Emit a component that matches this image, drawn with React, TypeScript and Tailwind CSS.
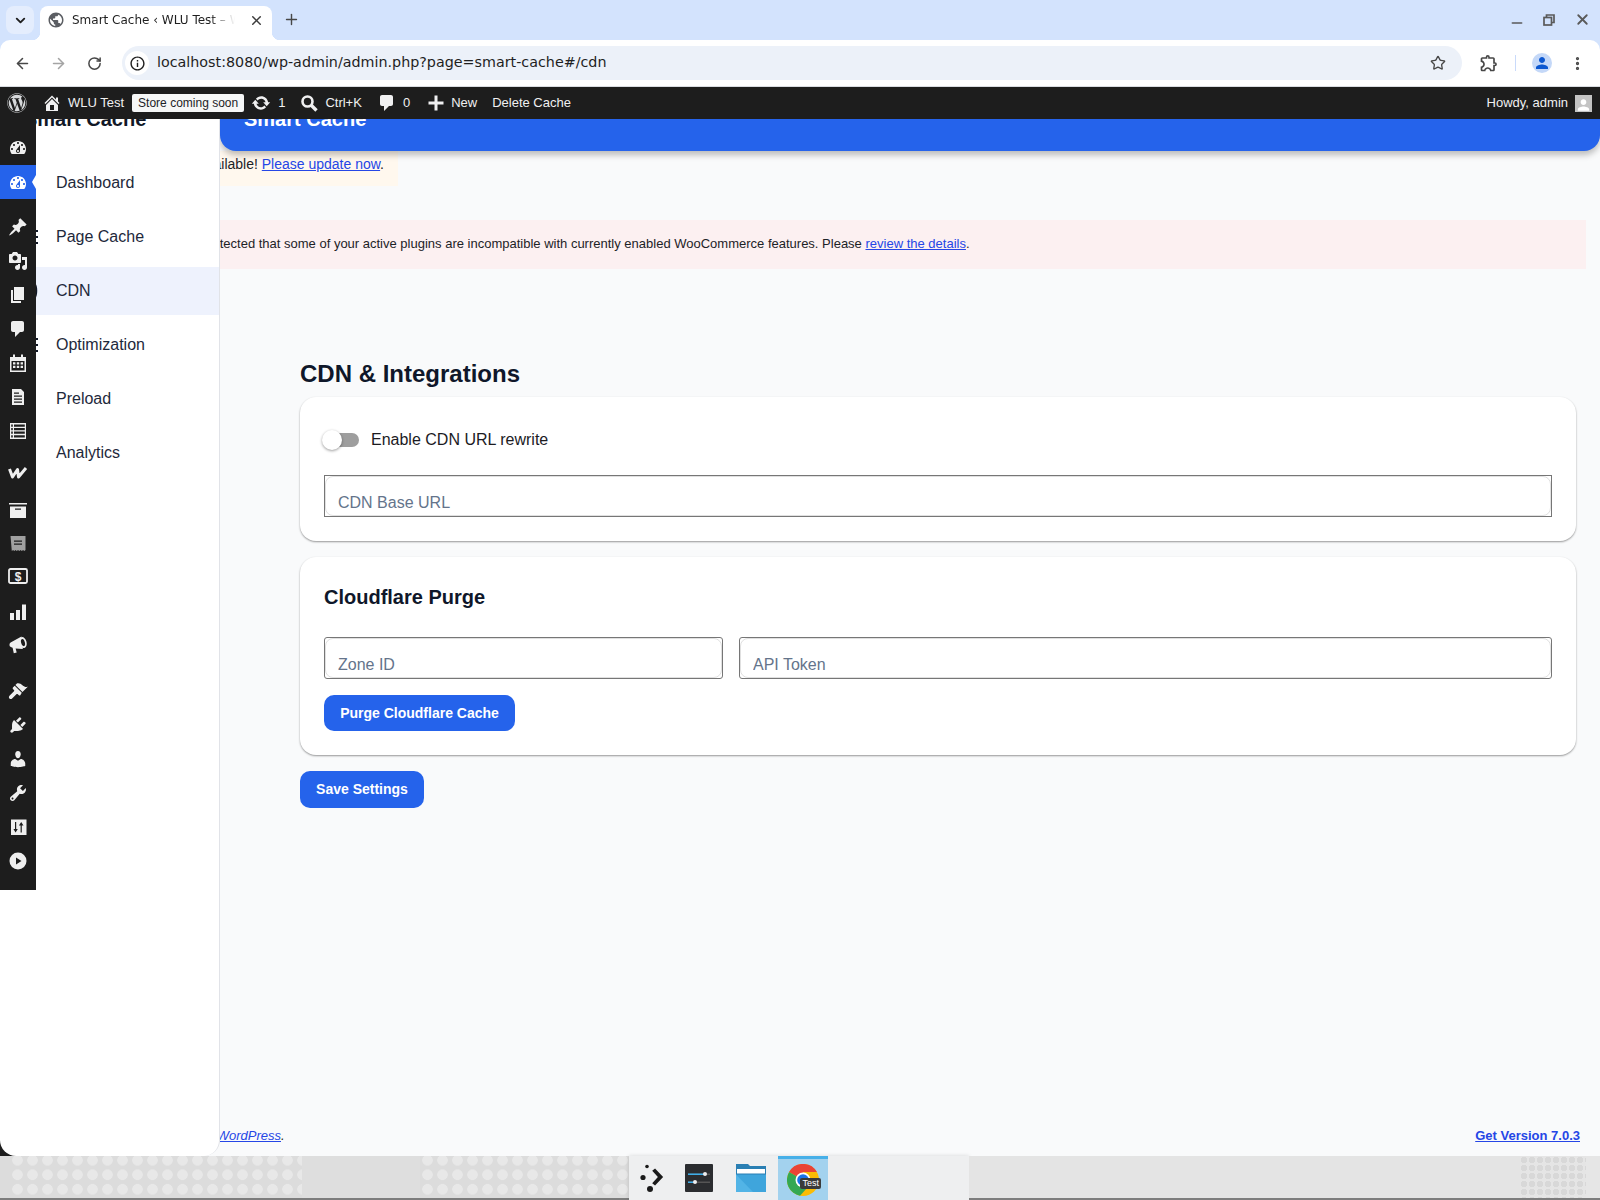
import { ArrowLeft, ArrowRight, ChevronDown, Minus, MoreVertical, Plus, RotateCw, Star, X } from "lucide-react";
import { FaWordpress } from "react-icons/fa";
import { MdInfoOutline, MdOutlineExtension, MdPerson, MdPublic } from "react-icons/md";
import type { ReactNode } from "react";

// Dashicons-style paths for the wp-admin menu, all on a 20x20 box.
const ICONS: Record<string, string> = {
  dashboard:
    "M3.76 16h12.48c1.1-1.37 1.76-3.11 1.76-5 0-4.42-3.58-8-8-8s-8 3.58-8 8c0 1.89.66 3.63 1.76 5zM10 4c.55 0 1 .45 1 1s-.45 1-1 1-1-.45-1-1 .45-1 1-1zM6 6c.55 0 1 .45 1 1s-.45 1-1 1-1-.45-1-1 .45-1 1-1zm8 0c.55 0 1 .45 1 1s-.45 1-1 1-1-.45-1-1 .45-1 1-1zm-5.37 5.55L12 7v6c0 1.1-.9 2-2 2s-2-.9-2-2c0-.57.24-1.08.63-1.45zM4 10c.55 0 1 .45 1 1s-.45 1-1 1-1-.45-1-1 .45-1 1-1zm12 0c.55 0 1 .45 1 1s-.45 1-1 1-1-.45-1-1 .45-1 1-1zm-5 3c0-.55-.45-1-1-1s-1 .45-1 1 .45 1 1 1 1-.45 1-1z",
  pin: "M10.44 3.02l1.82-1.82 6.36 6.35-1.83 1.82c-1.05-.68-2.48-.57-3.41.36l-.75.75c-.92.93-1.04 2.35-.35 3.41l-1.83 1.82-2.41-2.41-2.8 2.79c-.42.42-3.38 2.71-3.8 2.29s1.86-3.39 2.28-3.81l2.79-2.79L4.1 9.36l1.83-1.82c1.05.69 2.48.57 3.4-.36l.75-.75c.93-.92 1.05-2.35.36-3.41z",
  media:
    "M13 11V4c0-.55-.45-1-1-1h-1.67L9 1H5L3.67 3H2c-.55 0-1 .45-1 1v7c0 .55.45 1 1 1h10c.55 0 1-.45 1-1zM7 4.5c1.38 0 2.5 1.12 2.5 2.5S8.38 9.5 7 9.5 4.5 8.38 4.5 7 5.62 4.5 7 4.5zM14 6h5v10.5c0 1.38-1.12 2.5-2.5 2.5S14 17.88 14 16.5s1.12-2.5 2.5-2.5c.17 0 .34.02.5.05V9h-3V6zm-4 8.05V13h2v3.5c0 1.38-1.12 2.5-2.5 2.5S7 17.88 7 16.5 8.12 14 9.5 14c.17 0 .34.02.5.05z",
  pages: "M6 15V2h10v13H6zm-1 1h8v2H3V5h2v11z",
  comment: "M5 2h9c1.1 0 2 .9 2 2v7c0 1.1-.9 2-2 2h-2l-5 5v-5H5c-1.1 0-2-.9-2-2V4c0-1.1.9-2 2-2z",
  calendar:
    "M5 1.5h2V4h6V1.5h2V4h3v15H2V4h3zM3.5 8v9.5h13V8zM5 9.2h2.4v2.2H5zM8.8 9.2h2.4v2.2H8.8zM12.6 9.2H15v2.2h-2.4zM5 12.8h2.4V15H5zM8.8 12.8h2.4V15H8.8zM12.6 12.8H15V15h-2.4z",
  file: "M4 2h9l3 3v13H4zM6 5.5h5v1.2H6zM6 8.5h8v1.2H6zM6 11.5h8v1.2H6zM6 14.5h8v1.2H6z",
  table:
    "M2 2h16v16H2zM3.2 3.5v2.2h1.6V3.5zM6 3.5v2.2h10.8V3.5zM3.2 7v2.2h1.6V7zM6 7v2.2h10.8V7zM3.2 10.6v2.2h1.6v-2.2zM6 10.6v2.2h10.8v-2.2zM3.2 14.2v2.2h1.6v-2.2zM6 14.2v2.2h10.8v-2.2z",
  archive: "M1 3h18v1.5H1zM2 6.5h16V18H2zM7 8.5v1.2h6V8.5z",
  receipt: "M2.5 2h15v14l-1.2 1-1.2-1-1.3 1-1.2-1-1.3 1-1.3-1-1.2 1-1.3-1-1.2 1-1.2-1-1.3 1zM6 6.5v1.3h8V6.5zM6 9.5v1.3h8V9.5z",
  bars: "M2 11h4v7H2zM8 8h4v10H8zM14 2.5h4V18h-4z",
  brush:
    "M14.48 11.06L7.41 3.99l1.5-1.5c.5-.56 2.3-.47 3.51.32 1.21.8 1.43 1.28 2.91 2.1 1.18.64 2.45 1.26 4.45.85zM13.77 11.77L6.7 4.7 4.93 6.47c-.39.39-.39 1.02 0 1.41l1.06 1.06c.39.39.39 1.03 0 1.42L1.5 14.7c-.8.8-.8 1.9-.1 2.7s1.9.9 2.7.1l4.3-4.3c.39-.39 1.03-.39 1.42 0l1.06 1.06c.39.39 1.02.39 1.41 0z",
  plug: "M13.11 4.36L9.87 7.6 8 5.73l3.24-3.24c.35-.34 1.05-.2 1.56.32.52.51.66 1.21.31 1.55zm-8 1.77l.91-1.12 9.01 9.01-1.19.84c-.71.71-2.63 1.16-3.82 1.16H6.14L4.9 17.26c-.59.59-1.54.59-2.12 0-.59-.58-.59-1.53 0-2.12l1.24-1.24v-3.88c0-1.13.4-3.19 1.09-3.89zm7.26 3.97l3.24-3.24c.34-.35 1.04-.21 1.55.31.52.51.66 1.21.31 1.55l-3.24 3.25z",
  user: "M10 9.25c-2.27 0-2.73-3.44-2.73-3.44C7 4.02 7.82 2 9.97 2c2.16 0 2.98 2.02 2.71 3.81 0 0-.41 3.44-2.68 3.44zm0 2.57L12.72 10c2.39 0 4.52 2.33 4.52 4.53v2.49s-3.65 1.13-7.24 1.13c-3.65 0-7.24-1.13-7.24-1.13v-2.49c0-2.25 1.94-4.48 4.47-4.48z",
  wrench:
    "M16.68 9.77c-1.34 1.34-3.3 1.67-4.95.99l-5.41 6.52c-.99.99-2.59.99-3.58 0s-.99-2.59 0-3.57l6.52-5.42c-.68-1.65-.35-3.61.99-4.95 1.28-1.28 3.12-1.62 4.72-1.06l-2.89 2.89 2.82 2.82 2.86-2.87c.53 1.58.18 3.39-1.08 4.65zM3.81 16.21c.4.39 1.04.39 1.43 0 .4-.4.4-1.04 0-1.43-.39-.4-1.03-.4-1.43 0-.39.39-.39 1.03 0 1.43z",
  sliders: "M3 2.5h15.5V18H3zM7 5v7H5.4L7.6 15.5 9.8 12H8.2V5zM12.6 15.5h1.2V8.5h1.7l-2.3-3.5-2.3 3.5h1.7z",
  play: "M10 1.5a8.5 8.5 0 1 0 0 17a8.5 8.5 0 1 0 0-17zM8 6.5l5.5 3.5L8 13.5z",
  update:
    "M10.2 3.28c3.53 0 6.43 2.61 6.92 6h2.08l-3.5 4-3.5-4h2.32c-.45-1.97-2.21-3.45-4.32-3.45-1.45 0-2.73.71-3.54 1.78L4.95 5.66C6.23 4.2 8.11 3.28 10.2 3.28zm-.4 13.44c-3.52 0-6.43-2.61-6.92-6H.8l3.5-4c1.17 1.33 2.33 2.67 3.5 4H5.48c.45 1.97 2.21 3.45 4.32 3.45 1.45 0 2.73-.71 3.54-1.78l1.71 1.95c-1.28 1.46-3.15 2.38-5.25 2.38z",
  home: "M16 8.5l1.53 1.53-1.06 1.06L10 4.62l-6.47 6.47-1.06-1.06L10 2.5l4 4v-2h2v4zm-6-2.46l6 5.99V18H4v-5.97zM12 17v-5H8v5h4z",
  plus: "M17.5 8.5v3h-6v6h-3v-6h-6v-3h6v-6h3v6z",
};

function Dash({ name, className = "w-5 h-5" }: { name: string; className?: string }) {
  return (
    <svg viewBox="0 0 20 20" className={className} fill="currentColor" fillRule="evenodd" aria-hidden>
      <path d={ICONS[name]} />
    </svg>
  );
}

// --- browser chrome ---

function TabStrip() {
  return (
    <div className="flex h-[40px] items-end pl-[6px] pr-[8px]">
      <div className="mb-[6px] flex h-[28px] w-[28px] items-center justify-center rounded-lg bg-[#e4edfd] text-[#1f1f1f]">
        <ChevronDown size={15} strokeWidth={3} />
      </div>
      <span className="relative z-10 -ml-[2px] h-2 w-2 bg-[radial-gradient(circle_at_0_0,transparent_8px,white_8.5px)]" />
      <div className="flex h-[34px] w-[232px] items-center rounded-t-lg bg-white pb-[6px] pl-[7px]">
        <MdPublic size={18} className="shrink-0 text-[#5b5e63]" />
        <span className="ml-[7px] w-[168px] overflow-hidden whitespace-nowrap font-['DejaVu_Sans',sans-serif] text-[12px] text-[#1f1f1f] [mask-image:linear-gradient(to_right,black_82%,transparent_97%)]">
          Smart Cache ‹ WLU Test – WordPress
        </span>
        <X size={15} strokeWidth={2.4} className="ml-[9px] text-[#3c3c3c]" />
      </div>
      <span className="h-2 w-2 bg-[radial-gradient(circle_at_100%_0,transparent_8px,white_8.5px)]" />
      <Plus size={17} className="mb-[12px] ml-[3px] text-[#474747]" />
      <div className="ml-auto mb-[9px] flex items-center text-[#5a5a5a]">
        <Minus size={16} strokeWidth={2.4} className="mt-[7px] translate-x-[1px]" />
        <svg viewBox="0 0 12 12" className="ml-[18px] h-[12px] w-[12px] translate-x-[1px]" fill="none" stroke="currentColor" strokeWidth="1.7">
          <path d="M3.5 3V1h7.5v7.5H9" />
          <rect x="1" y="3.5" width="7.5" height="7.5" />
        </svg>
        <X size={17} strokeWidth={2.6} className="ml-[21px] -translate-x-[1px]" />
      </div>
    </div>
  );
}

function Toolbar() {
  return (
    <div className="flex h-[47px] items-center rounded-t-[10px] border-b border-[#d9dce1] bg-white pl-[4px]">
      <div className="flex h-9 w-9 items-center justify-center text-[#474747]">
        <ArrowLeft size={17} strokeWidth={2.2} />
      </div>
      <div className="flex h-9 w-9 items-center justify-center text-[#a4a4a4]">
        <ArrowRight size={17} strokeWidth={2.2} />
      </div>
      <div className="flex h-9 w-9 items-center justify-center text-[#474747]">
        <RotateCw size={15} strokeWidth={2.4} />
      </div>
      <div className="ml-[10px] flex h-[34px] w-[1340px] items-center rounded-full bg-[#ecf1f9] pl-[3px] pr-[16px]">
        <div className="flex h-[24px] w-[24px] items-center justify-center rounded-full bg-white text-[#1f1f1f]">
          <MdInfoOutline size={17} />
        </div>
        <span className="ml-[8px] font-['DejaVu_Sans',sans-serif] text-[14.3px] text-[#1f1f1f]">
          localhost:8080/wp-admin/admin.php?page=smart-cache#/cdn
        </span>
        <Star size={16} strokeWidth={2} className="ml-auto text-[#474747]" />
      </div>
      <MdOutlineExtension size={20} className="ml-[17px] text-[#474747]" />
      <div className="ml-[16px] h-[16px] w-[1px] bg-[#c9dafa]" />
      <div className="ml-[16px] flex h-[20px] w-[20px] items-center justify-center rounded-full bg-[#c4d8f8] text-[#0b57d0]">
        <MdPerson size={18} />
      </div>
      <MoreVertical size={17} strokeWidth={2.6} className="ml-[17px] text-[#474747]" />
    </div>
  );
}

// --- wp admin bar ---

function AdminBar() {
  return (
    <div className="flex h-[32px] items-center bg-[#1d1d1d] pr-[8px] text-[13px] text-[#f0f0f1]">
      <div className="flex w-[33px] justify-center">
        <FaWordpress size={20} className="text-[#d6d8da]" />
      </div>
      <Dash name="home" className="ml-[9px] h-5 w-5" />
      <span className="ml-[6px]">WLU Test</span>
      <span className="ml-[8px] flex h-[18px] items-center rounded-[2px] bg-[#f6f7f7] px-[6px] text-[12px] text-[#1d2327]">
        Store coming soon
      </span>
      <Dash name="update" className="ml-[7px] h-5 w-5" />
      <span className="ml-[7px]">1</span>
      <svg viewBox="0 0 20 20" className="ml-[14px] h-5 w-5" fill="none" stroke="currentColor" aria-hidden>
        <circle cx="8.5" cy="8.5" r="5" strokeWidth="2.6" />
        <path d="M12 12l5.5 5.5" strokeWidth="3.4" />
      </svg>
      <span className="ml-[6px]">Ctrl+K</span>
      <Dash name="comment" className="ml-[15px] h-5 w-5" />
      <span className="ml-[6px]">0</span>
      <Dash name="plus" className="ml-[16px] h-5 w-5" />
      <span className="ml-[5px]">New</span>
      <span className="ml-[15px]">Delete Cache</span>
      <span className="ml-auto">Howdy, admin</span>
      <div className="ml-[7px] flex h-[17px] w-[17px] items-end justify-center overflow-hidden bg-[#c4c4c4] text-white">
        <MdPerson size={20} className="-mb-[3px]" />
      </div>
    </div>
  );
}

// --- wp admin menu, lies over the plugin's own sidebar ---

const MENU: { name: string; cls?: string; wrap?: string }[] = [
  { name: "dashboard" },
  { name: "dashboard", wrap: "active", cls: "translate-y-[1px]" },
  { name: "pin", wrap: "mt-[11px]" },
  { name: "media" },
  { name: "pages" },
  { name: "comment" },
  { name: "calendar" },
  { name: "file" },
  { name: "table" },
  { name: "woo", wrap: "mt-[8px]" },
  { name: "archive", cls: "translate-y-[3px]" },
  { name: "receipt", cls: "translate-y-[3px] text-[#a0a0a0]" },
  { name: "dollar", cls: "translate-y-[1px]" },
  { name: "bars", cls: "translate-y-[3px]" },
  { name: "horn", cls: "translate-y-[2px]" },
  { name: "brush", wrap: "mt-[14px]" },
  { name: "plug" },
  { name: "user" },
  { name: "wrench" },
  { name: "sliders" },
  { name: "play" },
];

function MenuIcon({ name, cls = "" }: { name: string; cls?: string }) {
  if (name === "woo") {
    return (
      <svg viewBox="0 0 20 20" className="h-5 w-5" fill="none" stroke="currentColor" strokeWidth="3" strokeLinejoin="round" aria-hidden>
        <path d="M1.5 6l3 8 5-7.5 1 7.5 7.5-9" />
      </svg>
    );
  }
  if (name === "dollar") {
    return (
      <svg viewBox="0 0 20 20" className={`h-5 w-5 ${cls}`} aria-hidden>
        <rect x="1" y="3" width="18" height="14" rx="1.5" fill="none" stroke="currentColor" strokeWidth="1.8" />
        <text x="10" y="14.5" textAnchor="middle" fontSize="12" fontWeight="700" fontFamily="Liberation Sans" fill="currentColor">
          $
        </text>
      </svg>
    );
  }
  if (name === "horn") {
    return (
      <svg viewBox="0 0 20 20" className={`h-5 w-5 ${cls}`} aria-hidden>
        <path d="M13.5 1.5L2.6 7.4c-1.6.9-1.5 4 .2 4.7l1.8.6 1.2 5.5 2.9-.7-1.1-4.1 7.2 .6z" fill="currentColor" />
        <ellipse cx="15" cy="7.6" rx="3.6" ry="5.6" transform="rotate(-14 15 7.6)" fill="currentColor" />
        <ellipse cx="15" cy="7.6" rx="1.9" ry="3.6" transform="rotate(-14 15 7.6)" fill="#1d1d1d" />
      </svg>
    );
  }
  return <Dash name={name} className={`h-5 w-5 ${cls}`} />;
}

function WpMenu() {
  return (
    <div className="absolute left-0 top-0 z-20 flex h-[771px] w-[36px] flex-col bg-[#1d1d1d] pt-[12px] text-[#efefef]">
      {MENU.map((m, i) => (
        <div
          key={i}
          className={`relative flex h-[34px] shrink-0 items-center justify-center ${m.wrap === "active" ? "bg-[#2563eb] text-white" : m.wrap ?? ""}`}
        >
          <MenuIcon name={m.name} cls={m.cls} />
          {m.wrap === "active" && (
            <span className="absolute right-0 top-[10px] h-0 w-0 border-y-[7px] border-r-[4px] border-y-transparent border-r-white" />
          )}
        </div>
      ))}
    </div>
  );
}

// --- plugin sidebar ---

const NAV: { label: string; active?: boolean; stub: ReactNode }[] = [
  { label: "Dashboard", stub: <path d="M12 0h2v17h-2z" /> },
  { label: "Page Cache", stub: <path d="M11 2h5v2h-5zM11 8h5v2h-5zM11 14h5v2h-5z" /> },
  { label: "CDN", active: true, stub: <path d="M13 1c3 2 3 13 0 16l-1-1c2-3 2-11 0-14z" /> },
  { label: "Optimization", stub: <path d="M11 2h5v2h-5zM11 8h5v2h-5zM11 14h5v2h-5z" /> },
  { label: "Preload", stub: null },
  { label: "Analytics", stub: null },
];

function Sidebar() {
  return (
    <div className="relative w-[220px] shrink-0 bg-[#f9fafb]">
      <div className="absolute bottom-0 left-0 h-4 w-4 bg-[#1d1d1d]" />
      <div className="relative flex h-full flex-col overflow-hidden rounded-b-2xl border-r border-[#e1e3e8] bg-white">
        <div className="-mt-[14px] mb-[26px] pl-6 text-[20px] font-bold leading-[28px] text-[#111827]">Smart Cache</div>
        {NAV.map((n) => (
          <div
            key={n.label}
            className={`mb-[6px] flex h-12 items-center pl-[22px] text-[16px] text-[#1e293b] ${n.active ? "bg-[#eef2fd]" : ""}`}
          >
            <svg viewBox="0 0 16 18" className="mr-[18px] h-[18px] w-4 shrink-0 text-[#111827]" fill="currentColor" aria-hidden>
              {n.stub}
            </svg>
            {n.label}
          </div>
        ))}
      </div>
      <WpMenu />
    </div>
  );
}

// --- main content ---

function TextField({ placeholder, square }: { placeholder: string; square?: boolean }) {
  return (
    <div className={`h-[42px] min-w-0 flex-1 border border-[#767676] bg-white ${square ? "" : "rounded-[3px]"}`}>
      <input
        placeholder={placeholder}
        className="block h-full w-full rounded-[8px] border border-[#e0e0e0] bg-transparent px-[12px] pt-[14px] text-[16px] outline-none placeholder:text-[#64748b]"
      />
    </div>
  );
}

function Main() {
  return (
    <div className="flex min-w-0 flex-1 flex-col overflow-hidden bg-[#f9fafb]">
      <div className="relative z-10 -mt-[24px] h-[56px] shrink-0 rounded-b-2xl bg-[#2563eb] pl-[24px] pt-[10px] text-[20px] font-bold leading-[28px] text-white shadow-[0_4px_6px_rgba(0,0,0,0.25)]">
        Smart Cache
      </div>
      <div className="flex h-[35px] w-[178px] shrink-0 items-center justify-end overflow-hidden whitespace-nowrap bg-[#fff8ee] pb-[9px] pr-[14px] text-[14px] text-[#1d2327]">
        <span>
          WordPress 7.0.3 is available!{" "}
          <a href="#" className="text-[#2546e6] underline">
            Please update now
          </a>
          .
        </span>
      </div>
      <div className="mt-[34px] mr-[14px] flex h-[49px] shrink-0 items-center overflow-hidden whitespace-nowrap bg-[#fcf0f1] pb-[2px] text-[13px] text-[#1d2327]">
        <span className="-ml-[133px]">
          WooCommerce has detected that some of your active plugins are incompatible with currently enabled WooCommerce features. Please{" "}
          <a href="#" className="text-[#2546e6] underline">
            review the details
          </a>
          .
        </span>
      </div>
      <div className="ml-[80px] mr-[24px] flex flex-col">
        <h2 className="mt-[89px] mb-[7px] text-[24px] font-bold leading-[32px] text-[#0f172a]">CDN &amp; Integrations</h2>
        <div className="rounded-2xl bg-white px-6 pb-6 pt-[33px] shadow-[0_1px_2px_rgba(0,0,0,0.4)]">
          <div className="flex h-5 items-center">
            <div className="relative h-[14px] w-[35px] rounded-full bg-[#9e9e9e]">
              <span className="absolute -left-[2px] -top-[3px] h-5 w-5 rounded-full bg-white shadow-[0_1px_3px_rgba(0,0,0,0.4)]" />
            </div>
            <span className="ml-[12px] text-[16px] text-[#1c1b1f]">Enable CDN URL rewrite</span>
          </div>
          <div className="mt-[25px] flex">
            <TextField placeholder="CDN Base URL" square />
          </div>
        </div>
        <div className="mt-4 rounded-2xl bg-white px-6 pb-6 pt-[26px] shadow-[0_1px_2px_rgba(0,0,0,0.4)]">
          <h3 className="text-[20px] font-bold leading-[28px] text-[#0f172a]">Cloudflare Purge</h3>
          <div className="mt-[26px] flex gap-4">
            <div className="flex w-[399px] shrink-0">
              <TextField placeholder="Zone ID" />
            </div>
            <TextField placeholder="API Token" />
          </div>
          <button className="mt-4 flex h-[36px] w-[191px] items-center justify-center rounded-[10px] bg-[#2563eb] text-[14px] font-bold text-white">
            Purge Cloudflare Cache
          </button>
        </div>
        <button className="mt-4 flex h-[37px] w-[124px] items-center justify-center rounded-[10px] bg-[#2563eb] text-[14px] font-bold text-white">
          Save Settings
        </button>
      </div>
      <div className="mt-auto flex h-[30px] shrink-0 items-start justify-between whitespace-nowrap pr-[20px] text-[13px] text-[#1d2327]">
        <em className="-ml-[163px]">
          Thank you for creating with{" "}
          <a href="#" className="text-[#2546e6] underline">
            WordPress
          </a>
          .
        </em>
        <a href="#" className="font-bold text-[#2546e6] underline">
          Get Version 7.0.3
        </a>
      </div>
    </div>
  );
}

// --- desktop panel under the browser ---

const DOTS = "bg-[radial-gradient(circle,#e8e8e8_5px,transparent_5.5px)] bg-[length:15px_14.5px] bg-[position:0_-3px]";

function Dock() {
  return (
    <div className="flex h-[44px] w-[340px] items-start bg-[#eeeff0] pl-[8px] shadow-[0_0_4px_rgba(0,0,0,0.15)]">
      <svg viewBox="0 0 30 30" className="mt-[7px] h-[30px] w-[30px]" fill="#1a1a1a" aria-hidden>
        <circle cx="10" cy="3.5" r="1.8" />
        <circle cx="6" cy="14.5" r="2.6" />
        <circle cx="13" cy="26" r="3" />
        <path d="M16 3l3-2.5 8.5 9-8.5 9-3-2.5 6-6.5z" transform="translate(0 5) scale(.95)" />
      </svg>
      <svg viewBox="0 0 28 28" className="ml-[18px] mt-[8px] h-[28px] w-[28px]" aria-hidden>
        <rect width="28" height="28" rx="1" fill="#2b2d30" />
        <rect x="3" y="9.5" width="22" height="1.5" fill="#555" />
        <rect x="3" y="9.5" width="17" height="1.5" fill="#3daee9" />
        <circle cx="20" cy="10" r="2" fill="#eee" />
        <rect x="3" y="17.5" width="22" height="1.5" fill="#555" />
        <rect x="3" y="17.5" width="7" height="1.5" fill="#3daee9" />
        <circle cx="10" cy="18" r="2" fill="#eee" />
      </svg>
      <svg viewBox="0 0 30 28" className="ml-[23px] mt-[8px] h-[28px] w-[30px]" aria-hidden>
        <path d="M0 0h12l2 2h16v26H0z" fill="#2a7fb3" />
        <rect x="1" y="5" width="28" height="4.5" fill="#fff" />
        <path d="M0 10.5h30V28H0z" fill="#3fa5dc" />
        <path d="M0 10.5l17 17.5H0z" fill="#52b4e6" />
      </svg>
      <div className="ml-[12px] flex h-[44px] w-[50px] items-center justify-center border-t-[3px] border-[#47b0e8] bg-[#a3d2ee]">
        <div className="relative h-8 w-8">
          <svg viewBox="0 0 32 32" className="h-8 w-8" aria-hidden>
            <circle cx="16" cy="16" r="16" fill="#fbbc04" />
            <path d="M16 16L2.1 8A16 16 0 0 1 29.9 8H16z" fill="#ea4335" />
            <path d="M16 16L2.1 8A16 16 0 0 0 13 31.7L20 24z" fill="#34a853" />
            <circle cx="16" cy="16" r="7.5" fill="#fff" />
            <circle cx="16" cy="16" r="5.8" fill="#1a73e8" />
          </svg>
          <span className="absolute -right-[2px] top-[14px] rounded-[2px] bg-[#3a3a3a] px-[2px] text-[9px] leading-[11px] text-white">
            Test
          </span>
        </div>
      </div>
    </div>
  );
}

function DesktopPanel() {
  return (
    <div className="flex h-[44px] shrink-0">
      <div className="h-full w-[10px] border-b-2 border-[#7d7d7d] bg-[#dcdcdc]" />
      <div className={`h-full w-[292px] border-b-2 border-[#7d7d7d] bg-[#dcdcdc] ${DOTS}`} />
      <div className="h-full w-[118px] border-b-2 border-[#7d7d7d] bg-[#dedede]" />
      <div className={`h-full w-[209px] border-b-2 border-[#7d7d7d] bg-[#dcdcdc] ${DOTS}`} />
      <Dock />
      <div className="h-full w-[551px] border-b-2 border-[#7d7d7d] bg-[#e4e4e4]" />
      <div className="h-full w-[66px] border-b-2 border-[#7d7d7d] bg-[#e5e5e5] bg-[radial-gradient(circle,#d8d8d8_3px,transparent_3.5px)] bg-[length:8px_8px]" />
      <div className="h-full flex-1 border-b-2 border-[#7d7d7d] bg-[#e6e6e6]" />
    </div>
  );
}

export default function App() {
  return (
    <div className="flex h-[1200px] w-[1600px] flex-col overflow-hidden bg-[#d3e3fd] font-['Liberation_Sans',Arial,sans-serif]">
      <TabStrip />
      <Toolbar />
      <AdminBar />
      <div className="flex min-h-0 flex-1 overflow-hidden">
        <Sidebar />
        <Main />
      </div>
      <DesktopPanel />
    </div>
  );
}
